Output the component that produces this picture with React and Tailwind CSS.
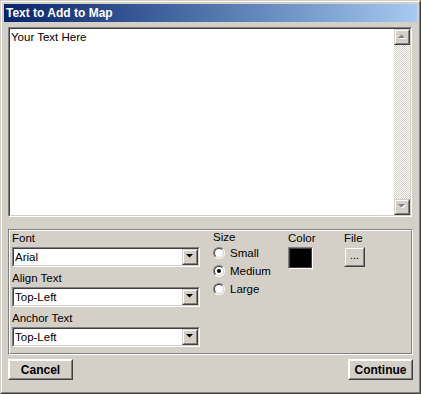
import React from 'react';

const FONT = "font-['Liberation_Sans',Arial,sans-serif]";

function Raised({ className = '', children }) {
  return (
    <div className={`border border-t-[#d4d0c8] border-l-[#d4d0c8] border-b-[#404040] border-r-[#404040] ${className}`}>
      <div className="w-full h-full border border-t-white border-l-white border-b-[#808080] border-r-[#808080] bg-[#d4d0c8] flex items-center justify-center">
        {children}
      </div>
    </div>
  );
}

function Sunken({ className = '', children }) {
  return (
    <div className={`border border-t-[#808080] border-l-[#808080] border-b-white border-r-white ${className}`}>
      <div className="w-full h-full border border-t-[#404040] border-l-[#404040] border-b-[#d4d0c8] border-r-[#d4d0c8] bg-white flex">
        {children}
      </div>
    </div>
  );
}

function Arrow({ up = false, disabled = false }) {
  const pts = up ? '0,4 7,4 3.5,0.5' : '0,0 7,0 3.5,3.5';
  return (
    <svg width="9" height="6" viewBox="0 0 9 6" className="block">
      {disabled && <polygon points={pts} transform="translate(1,1)" fill="#ffffff" />}
      <polygon points={pts} fill={disabled ? '#808080' : '#000000'} />
    </svg>
  );
}

function Select({ value }) {
  return (
    <Sunken className="w-[188px] h-[20px]">
      <div className="flex-1 text-[11.5px] leading-[16px] pl-[1px]">{value}</div>
      <Raised className="w-[16px] h-[16px]">
        <Arrow />
      </Raised>
    </Sunken>
  );
}

function Radio({ label, checked }) {
  return (
    <div className="h-[18px] flex items-center gap-[5px]">
      <div className="w-[12px] h-[12px] rounded-full border border-t-[#808080] border-l-[#808080] border-b-white border-r-white">
        <div className="w-full h-full rounded-full border border-t-[#404040] border-l-[#404040] border-b-[#d4d0c8] border-r-[#d4d0c8] bg-white flex items-center justify-center">
          {checked && <div className="w-[4px] h-[4px] rounded-full bg-black" />}
        </div>
      </div>
      <span className="text-[11.5px] leading-[14px]">{label}</span>
    </div>
  );
}

export default function App() {
  return (
    <div className={`w-[421px] h-[394px] bg-[#d4d0c8] text-black ${FONT}`}>
      <div className="h-full border border-t-[#d4d0c8] border-l-[#d4d0c8] border-b-[#404040] border-r-[#404040]">
        <div className="h-full border border-t-white border-l-white border-b-[#808080] border-r-[#808080] p-[2px] flex flex-col">
          <div className="h-[18px] bg-linear-to-r from-[#0a246a] to-[#a6caf0] flex items-center pl-[2px]">
            <span className="text-white font-bold text-[12px]">Text to Add to Map</span>
          </div>

          <div className="pl-[4px] pt-[5px]">
            <Sunken className="w-[404px] h-[190px]">
              <div className="flex-1 text-[11.5px] leading-[14px] pl-[1px] pt-[1px]">Your Text Here</div>
              <div className="w-[16px] flex flex-col">
                <Raised className="w-[16px] h-[16px]">
                  <Arrow up disabled />
                </Raised>
                <div className="flex-1 bg-[repeating-conic-gradient(#d4d0c8_0_25%,#ffffff_0_50%)] bg-[length:2px_2px]" />
                <Raised className="w-[16px] h-[16px]">
                  <Arrow disabled />
                </Raised>
              </div>
            </Sunken>

            <div className="mt-[12px] w-[405px] h-[126px] border border-t-[#808080] border-l-[#808080] border-b-white border-r-white">
              <div className="h-full border border-t-white border-l-white border-b-[#808080] border-r-[#808080] pl-[2px] flex">
                <div className="w-[188px] flex flex-col">
                  <div className="h-[14px] text-[11.5px] leading-[14px]">Font</div>
                  <div className="mt-[2px]"><Select value="Arial" /></div>
                  <div className="mt-[4px] h-[14px] text-[11.5px] leading-[14px]">Align Text</div>
                  <div className="mt-[2px]"><Select value="Top-Left" /></div>
                  <div className="mt-[4px] h-[14px] text-[11.5px] leading-[14px]">Anchor Text</div>
                  <div className="mt-[2px]"><Select value="Top-Left" /></div>
                </div>

                <div className="ml-[13px] w-[75px] flex flex-col">
                  <div className="h-[13px] text-[11.5px] leading-[13px]">Size</div>
                  <Radio label="Small" />
                  <Radio label="Medium" checked />
                  <Radio label="Large" />
                </div>

                <div className="w-[56px] flex flex-col">
                  <div className="h-[14px] text-[11.5px] leading-[14px]">Color</div>
                  <div className="mt-[2px] w-[25px] h-[22px] border border-t-[#808080] border-l-[#808080] border-b-white border-r-white">
                    <div className="w-full h-full border border-[#404040] bg-black" />
                  </div>
                </div>

                <div className="flex flex-col">
                  <div className="h-[14px] text-[11.5px] leading-[14px]">File</div>
                  <div className="mt-[2px]">
                    <Raised className="w-[21px] h-[20px]">
                      <span className="text-[11px] leading-[11px] pb-[3px]">...</span>
                    </Raised>
                  </div>
                </div>
              </div>
            </div>

            <div className="mt-[4px] w-[405px] flex justify-between">
              <Raised className="w-[65px] h-[21px] !border-t-white !border-l-white">
                <span className="font-bold text-[12px]">Cancel</span>
              </Raised>
              <Raised className="w-[65px] h-[21px] !border-t-white !border-l-white">
                <span className="font-bold text-[12px]">Continue</span>
              </Raised>
            </div>
          </div>
        </div>
      </div>
    </div>
  );
}
